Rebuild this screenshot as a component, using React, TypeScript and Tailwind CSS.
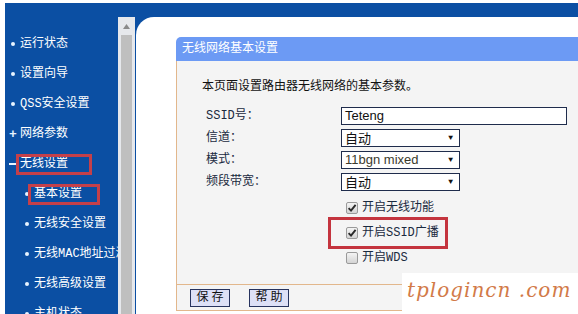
import React from "react";

const FONT = "font-['Liberation_Mono','Noto_Sans_CJK_SC',monospace]";

function Check({ checked }: { checked: boolean }) {
  return (
    <span className="w-[12px] h-[12px] rounded-[2px] border border-[#9a9a9a] bg-gradient-to-b from-[#f4f4f4] to-[#d4d4d4] flex items-center justify-center shrink-0">
      {checked && (
        <svg width="10" height="10" viewBox="0 0 10 10">
          <path d="M1.6 5.2 L4 7.6 L8.6 1.8" fill="none" stroke="#2a2a2a" strokeWidth="1.9" />
        </svg>
      )}
    </span>
  );
}

function Select({ value, latin }: { value: string; latin?: boolean }) {
  return (
    <div className="w-[119px] h-[18px] border border-[#1f2c4c] bg-white flex items-center pl-[3px] pr-[6px]">
      <span
        className={
          latin
            ? "font-['Liberation_Sans',sans-serif] text-[13px] text-[#3b3a2c] leading-none"
            : "font-['Noto_Sans_CJK_SC',sans-serif] text-[13px] text-[#111] leading-none"
        }
      >
        {value}
      </span>
      <span className="ml-auto text-[8px] leading-none text-[#111]">▼</span>
    </div>
  );
}

function TopItem({ marker, text, boxed }: { marker: "dot" | "plus" | "minus"; text: string; boxed?: boolean }) {
  return (
    <div className="h-[30px] flex items-center relative whitespace-nowrap">
      <div className="w-[15px] flex items-center justify-center shrink-0">
        {marker === "dot" && <span className="w-[4px] h-[4px] rounded-full bg-[#e8f4ff] ml-[1px]" />}
        {marker === "plus" && <span className="text-[13px] leading-none font-bold text-[#e8f4ff] ml-[1px]">+</span>}
        {marker === "minus" && <span className="w-[9px] h-[2px] bg-[#e8f4ff] ml-[2px]" />}
      </div>
      <span className="text-[12px] leading-none text-white">{text}</span>
      {boxed && <span className="absolute left-[11px] top-[5px] w-[76px] h-[21px] border-[3px] border-[#c4404a]" />}
    </div>
  );
}

function SubItem({ text, boxed }: { text: string; boxed?: boolean }) {
  return (
    <div className="h-[30px] flex items-center relative whitespace-nowrap pl-[20px]">
      <span className="w-[4px] h-[4px] rounded-full bg-[#e8f4ff] shrink-0" />
      <span className="ml-[5px] text-[12px] leading-none text-white">{text}</span>
      {boxed && <span className="absolute left-[23px] top-[5px] w-[72px] h-[21px] border-[3px] border-[#c4404a]" />}
    </div>
  );
}

export default function App() {
  return (
    <div className={`w-[578px] h-[314px] bg-white overflow-hidden relative pt-[3px] pl-[5px] ${FONT}`}>
      <div className="flex flex-col h-full bg-[#0b4fa3]">
        <div className="h-[14px] shrink-0" />
        <div className="flex flex-1 min-h-0">
          {/* Sidebar */}
          <nav className="w-[113px] shrink-0 pt-[12px] overflow-hidden">
            <TopItem marker="dot" text="运行状态" />
            <TopItem marker="dot" text="设置向导" />
            <TopItem marker="dot" text="QSS安全设置" />
            <TopItem marker="plus" text="网络参数" />
            <TopItem marker="minus" text="无线设置" boxed />
            <SubItem text="基本设置" boxed />
            <SubItem text="无线安全设置" />
            <SubItem text="无线MAC地址过滤" />
            <SubItem text="无线高级设置" />
            <SubItem text="主机状态" />
          </nav>
          {/* Scrollbar */}
          <div className="w-[17px] shrink-0 bg-[#e6e8ec] flex flex-col">
            <div className="h-[18px] flex items-center justify-center">
              <svg width="7" height="5" viewBox="0 0 7 5">
                <path d="M0 5 L3.5 0 L7 5 Z" fill="#8a8a8a" />
              </svg>
            </div>
            <div className="flex-1 mx-[3px] bg-[#bfbfbf]" />
          </div>
          {/* Main */}
          <div className="flex-1 bg-[#0b4fa3] pl-[1px]">
            <div className="h-full bg-white rounded-tl-[18px] pt-[20px] pl-[40px] flex flex-col">
              <div className="flex flex-col">
                <div className="h-[24px] bg-[#6c9af4] rounded-tl-[5px] flex items-center pl-[6px]">
                  <span className="text-[12px] leading-none text-white">无线网络基本设置</span>
                </div>
                <div className="h-[223px] bg-[#f4f4f4] border-l border-[#e2b78c] flex flex-col">
                  <div className="pt-[13px] pl-[25px] h-[27px]">
                    <span className="text-[12px] leading-[14px] text-[#111] whitespace-nowrap">本页面设置路由器无线网络的基本参数。</span>
                  </div>
                  <div className="pl-[29px] pt-[19px] flex flex-col gap-[5px]">
                    <div className="h-[17px] flex items-center">
                      <span className="w-[135px] text-[12px] leading-none text-[#1a2a40]">SSID号：</span>
                      <div className="w-[226px] h-[18px] border border-[#1f2c4c] bg-white flex items-center pl-[3px]">
                        <span className="font-['Liberation_Sans',sans-serif] text-[13px] leading-none text-[#111]">Teteng</span>
                      </div>
                    </div>
                    <div className="h-[17px] flex items-center">
                      <span className="w-[135px] text-[12px] leading-none text-[#1a2a40]">信道：</span>
                      <Select value="自动" />
                    </div>
                    <div className="h-[17px] flex items-center">
                      <span className="w-[135px] text-[12px] leading-none text-[#1a2a40]">模式：</span>
                      <Select value="11bgn mixed" latin />
                    </div>
                    <div className="h-[17px] flex items-center">
                      <span className="w-[135px] text-[12px] leading-none text-[#1a2a40]">频段带宽：</span>
                      <Select value="自动" />
                    </div>
                  </div>
                  <div className="pl-[169px] pt-[8px] flex flex-col gap-[5px]">
                    <div className="h-[20px] flex items-center gap-[4px]">
                      <Check checked />
                      <span className="text-[12px] leading-none text-[#1a2a40]">开启无线功能</span>
                    </div>
                    <div className="h-[20px] flex items-center gap-[4px] relative">
                      <Check checked />
                      <span className="text-[12px] leading-none text-[#1a2a40]">开启SSID广播</span>
                      <span className="absolute left-[-18px] top-[-6px] w-[120px] h-[32px] border-[3px] border-[#c4343e]" />
                    </div>
                    <div className="h-[20px] flex items-center gap-[4px]">
                      <Check checked={false} />
                      <span className="text-[12px] leading-none text-[#1a2a40]">开启WDS</span>
                    </div>
                  </div>
                </div>
                <div className="h-[27px] bg-[#f4f4f4] border-l border-t border-b border-[#e2b78c] flex items-center pl-[13px] gap-[19px]">
                  <button className="w-[40px] h-[18px] bg-[#dde0f6] border border-[#27335e] text-[12px] leading-none text-[#111] tracking-[3px] pl-[3px]">保存</button>
                  <button className="w-[40px] h-[18px] bg-[#dde0f6] border border-[#27335e] text-[12px] leading-none text-[#111] tracking-[3px] pl-[3px]">帮助</button>
                </div>
              </div>
            </div>
          </div>
        </div>
      </div>
      {/* watermark */}
      <div className="absolute left-[402px] top-[273px] right-0 bottom-0 bg-white pl-[5px] pt-[2px]">
        <span className="font-['DejaVu_Serif',serif] italic text-[20px] leading-[30px] text-[#d27a48] tracking-[1px] whitespace-nowrap">
          tplogincn .com
        </span>
      </div>
    </div>
  );
}
